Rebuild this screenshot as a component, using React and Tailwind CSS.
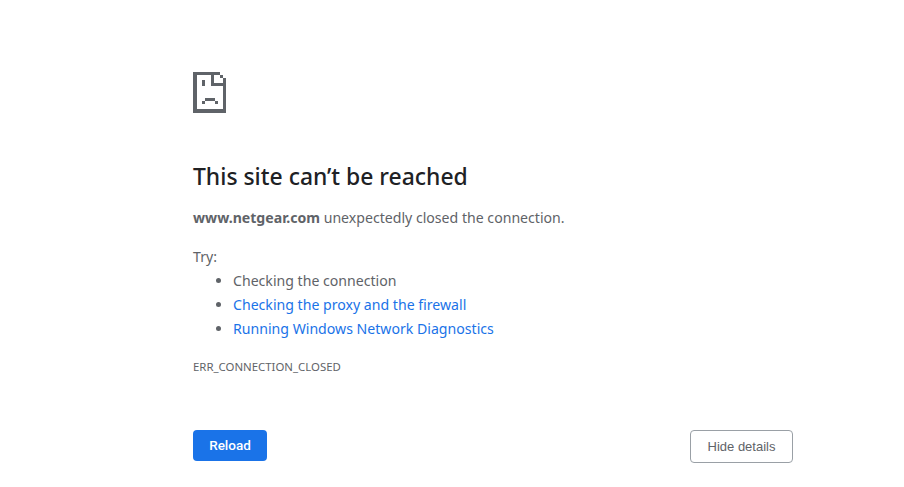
export default function App() {
  return (
    <div className="min-h-screen bg-white font-['Noto_Sans',sans-serif] text-[#5f6368]">
      <div className="w-[600px] ml-[193px] pt-[72px]">
        {/* sad page icon */}
        <svg width="33" height="41" viewBox="0 0 33 41" className="block" shapeRendering="crispEdges" fill="#5f6368">
          <rect x="0" y="0" width="4" height="41" />
          <rect x="0" y="37" width="33" height="4" />
          <rect x="30" y="6" width="3" height="35" />
          <rect x="0" y="0" width="27" height="3" />
          <rect x="27" y="3" width="3" height="3" />
          <rect x="18" y="0" width="3" height="14" />
          <rect x="18" y="11" width="15" height="3" />
          <rect x="9" y="8" width="3" height="6" />
          <rect x="12" y="26" width="10" height="3" />
          <rect x="9" y="29" width="3" height="3" />
          <rect x="22" y="29" width="3" height="3" />
        </svg>
        <h1 className="mt-[48px] text-[22.9px] leading-[32px] font-medium text-[#202124]">This site can’t be reached</h1>
        <p className="mt-[13px] text-[14.12px] leading-[24px]">
          <strong className="font-bold">www.netgear.com</strong> unexpectedly closed the connection.
        </p>
        <p className="mt-[15px] text-[14.12px] leading-[24px]">Try:</p>
        <ul className="list-disc pl-[40px] text-[14.12px] leading-[24px]">
          <li>Checking the connection</li>
          <li><a className="text-[#1a73e8]">Checking the proxy and the firewall</a></li>
          <li><a className="text-[#1a73e8]">Running Windows Network Diagnostics</a></li>
        </ul>
        <p className="mt-[18px] text-[11.4px] leading-[16px]">ERR_CONNECTION_CLOSED</p>
        <div className="mt-[55px] flex items-start justify-between">
          <button className="h-[31px] w-[74px] rounded bg-[#1a73e8] font-['Roboto',sans-serif] text-[13.5px] font-medium text-white">Reload</button>
          <button className="h-[33px] w-[103px] rounded border border-[#9aa0a6] bg-white font-['Liberation_Sans',sans-serif] text-[13px] text-[#5f6368]">Hide details</button>
        </div>
      </div>
    </div>
  );
}
